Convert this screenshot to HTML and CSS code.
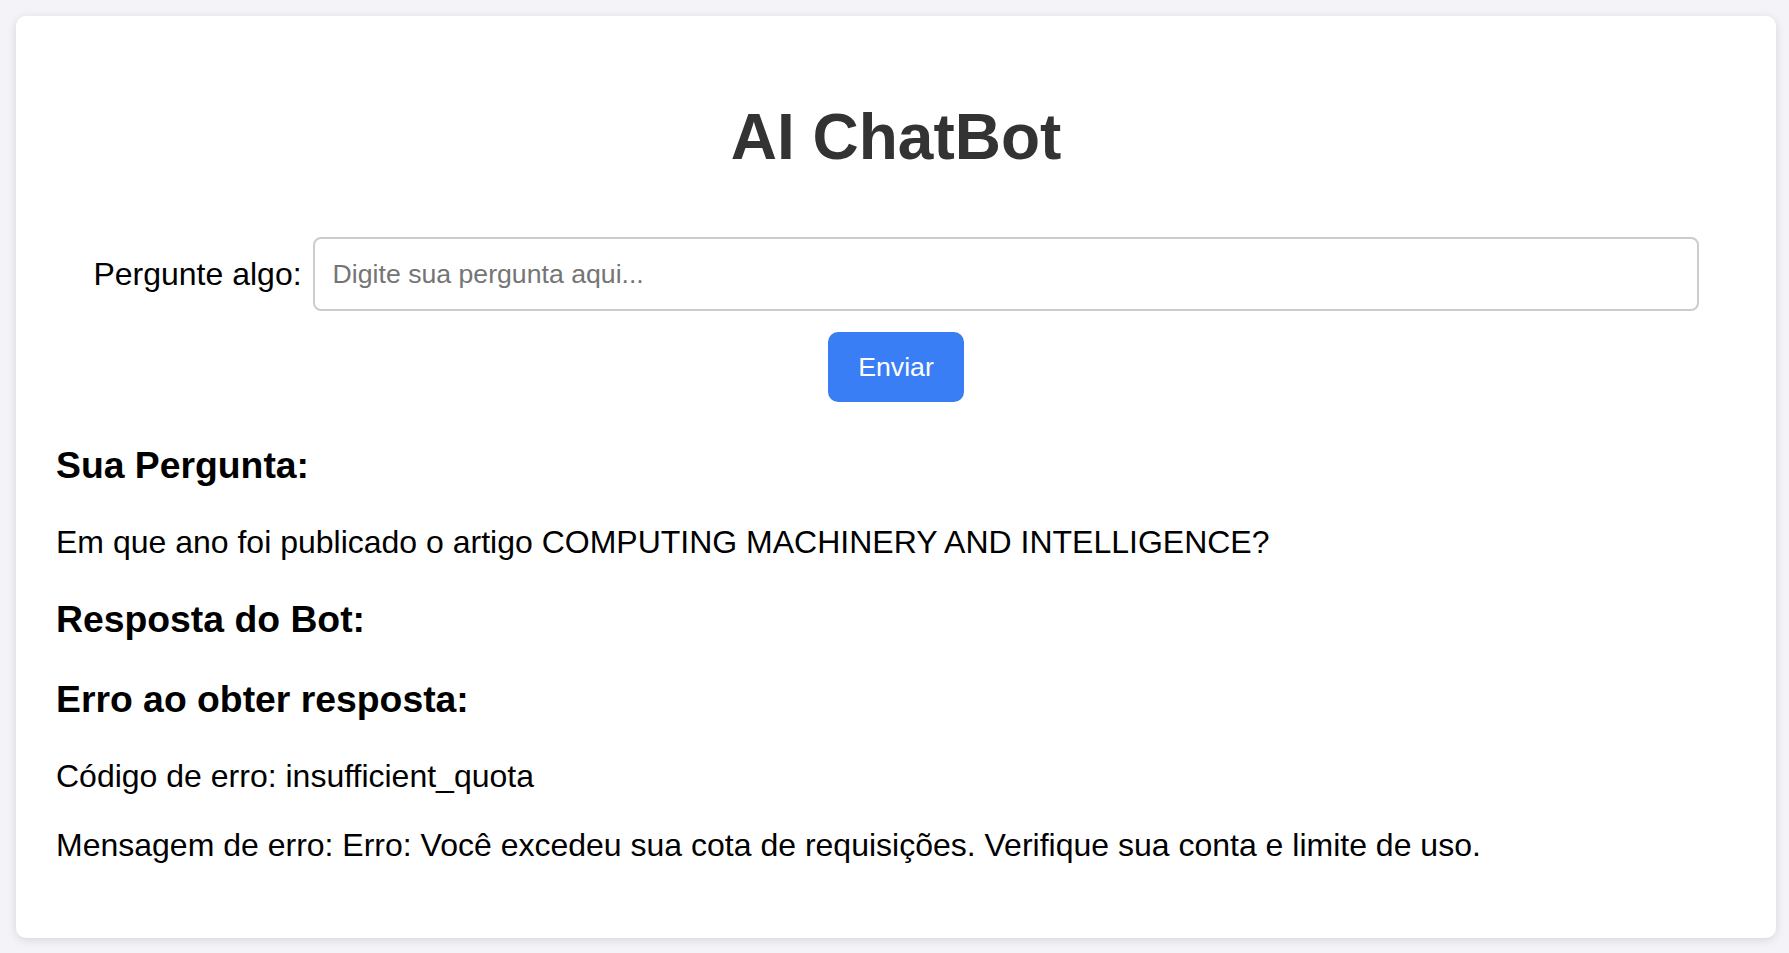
FILE: index.html
```html
<!DOCTYPE html>
<html lang="pt-BR">
<head>
<meta charset="utf-8">
<title>AI ChatBot</title>
<link rel="stylesheet" href="styles.css">
</head>
<body>
<div class="card">
  <h1 class="title">AI ChatBot</h1>
  <form class="ask-form">
    <div class="ask-row">
      <label class="ask-label" for="q">Pergunte algo:</label>
      <input class="ask-input" id="q" type="text" placeholder="Digite sua pergunta aqui...">
    </div>
    <button class="send-btn" type="button">Enviar</button>
  </form>
  <div class="result">
    <h3 class="section-title">Sua Pergunta:</h3>
    <p class="text">Em que ano foi publicado o artigo COMPUTING MACHINERY AND INTELLIGENCE?</p>
    <h3 class="section-title">Resposta do Bot:</h3>
    <h3 class="section-title">Erro ao obter resposta:</h3>
    <p class="text">Código de erro: insufficient_quota</p>
    <p class="text">Mensagem de erro: Erro: Você excedeu sua cota de requisições. Verifique sua conta e limite de uso.</p>
  </div>
</div>
</body>
</html>
```
FILE: styles.css
```css
html, body {
  margin: 0;
  padding: 0;
}
body {
  background: #f4f3f8;
  font-family: "Liberation Sans", Arial, Helvetica, sans-serif;
  font-size: 32px;
  color: #000;
  padding: 16px 13px 17px 16px;
}
.card {
  background: #fff;
  border-radius: 10px;
  box-shadow: 0 2px 10px rgba(0, 0, 0, 0.12);
  padding: 40px;
}
.title {
  margin: 45px 0 0;
  text-align: center;
  font-size: 64px;
  line-height: 73px;
  font-weight: bold;
  color: #333;
}
.ask-form {
  margin: 63px 0 0;
}
.ask-row {
  display: flex;
  justify-content: center;
  align-items: center;
}
.ask-label {
  margin-right: 11px;
  font-size: 32px;
}
.ask-input {
  box-sizing: border-box;
  width: 1386px;
  height: 74px;
  padding: 0 18px;
  border: 2px solid #cccccc;
  border-radius: 8px;
  font-family: "Liberation Sans", Arial, Helvetica, sans-serif;
  font-size: 26.67px;
  color: #000;
  outline: none;
}
.ask-input::placeholder {
  color: #757575;
}
.send-btn {
  display: block;
  margin: 21px auto 0;
  box-sizing: border-box;
  width: 136px;
  height: 70px;
  padding: 0;
  border: none;
  border-radius: 10px;
  background: #3a7ef6;
  color: #fff;
  font-family: "Liberation Sans", Arial, Helvetica, sans-serif;
  font-size: 26.67px;
}
.result {
  padding: 5px 0 34px;
}
.section-title {
  font-size: 37.33px;
  font-weight: bold;
  margin: 37px 0;
}
.text {
  font-size: 32px;
  margin: 32px 0;
}
.result > :last-child {
  margin-bottom: 0;
}
```
